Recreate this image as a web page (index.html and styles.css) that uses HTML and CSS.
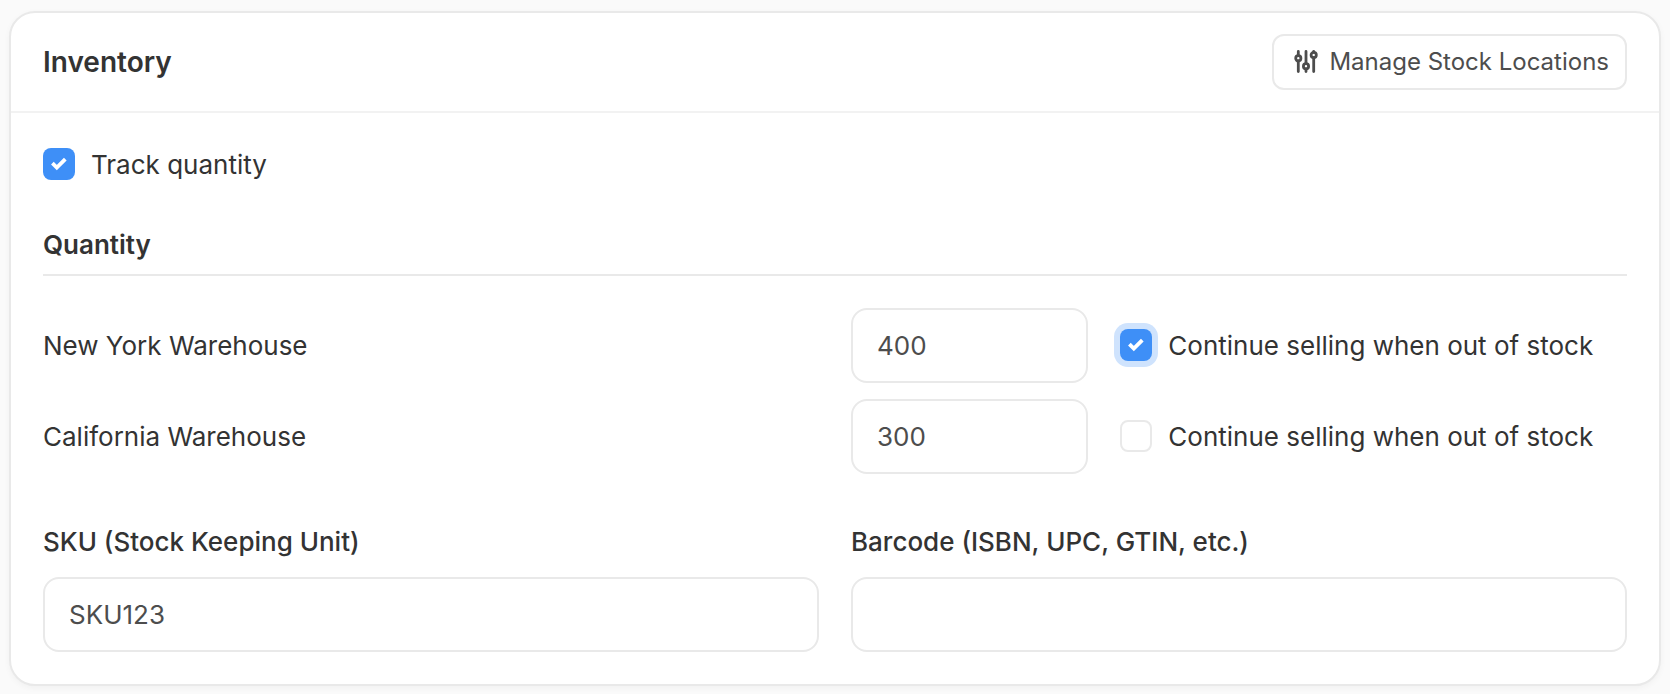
FILE: index.html
```html
<!DOCTYPE html>
<html lang="en">
<head>
<meta charset="utf-8">
<meta name="viewport" content="width=device-width, initial-scale=1">
<title>Inventory</title>
<link rel="stylesheet" href="styles.css">
</head>
<body>
<main class="card">
  <header class="card-header">
    <h1 class="card-title">Inventory</h1>
    <button class="button" type="button">
      <svg class="button-icon" viewBox="0 0 24 24" aria-hidden="true">
        <path d="M4.3 1.5V5.7M4.3 10.9V21.5M12 1.5V13.7M12 18.9V21.5M19.7 7.6V21.5M19.7 1.5V2.4"/>
        <circle cx="4.3" cy="8.3" r="2.6"/>
        <circle cx="12" cy="16.3" r="2.6"/>
        <circle cx="19.7" cy="5" r="2.6"/>
      </svg>
      Manage Stock Locations
    </button>
  </header>
  <div class="card-body">
    <label class="check"><input class="check-box" type="checkbox" checked><span>Track quantity</span></label>

    <section class="quantity">
      <h2 class="section-title">Quantity</h2>
      <div class="stock-row">
        <label class="stock-name" for="qty-ny">New York Warehouse</label>
        <input class="input" id="qty-ny" type="text" inputmode="numeric" value="400">
        <label class="check stock-check"><input class="check-box check-box-active" type="checkbox" checked><span>Continue selling when out of stock</span></label>
      </div>
      <div class="stock-row">
        <label class="stock-name" for="qty-ca">California Warehouse</label>
        <input class="input" id="qty-ca" type="text" inputmode="numeric" value="300">
        <label class="check stock-check"><input class="check-box" type="checkbox"><span>Continue selling when out of stock</span></label>
      </div>
    </section>

    <div class="fields">
      <div class="field">
        <label class="field-label" for="sku">SKU (Stock Keeping Unit)</label>
        <input class="input" id="sku" type="text" value="SKU123">
      </div>
      <div class="field">
        <label class="field-label" for="barcode">Barcode (ISBN, UPC, GTIN, etc.)</label>
        <input class="input" id="barcode" type="text">
      </div>
    </div>
  </div>
</main>
</body>
</html>
```
FILE: styles.css
```css
* {
  box-sizing: border-box;
}

body {
  margin: 0;
  padding: 11px 9px 8px;
  background: #fafafa;
  color: #333;
  font-family: Inter, "Liberation Sans", sans-serif;
  font-size: 26px;
  line-height: 40px;
}

.card {
  background: #fff;
  border: 2px solid #e9e9e9;
  border-radius: 26px;
  box-shadow: 0 2px 6px rgba(0, 0, 0, 0.04);
}

.card-header {
  display: flex;
  align-items: center;
  justify-content: space-between;
  padding: 21px 32px;
  border-bottom: 2px solid #f2f2f2;
}

.card-title {
  margin: 0;
  font-size: 28px;
  font-weight: 600;
}

.button {
  display: flex;
  align-items: center;
  gap: 11px;
  height: 56px;
  padding: 0 16px 0 20px;
  border: 2px solid #e9e9e9;
  border-radius: 12px;
  background: #fff;
  color: #4d4d4d;
  font: inherit;
  font-size: 24px;
}

.button-icon {
  width: 24px;
  height: 24px;
  fill: none;
  stroke: currentColor;
  stroke-width: 2.8;
  stroke-linecap: round;
}

.card-body {
  padding: 32px;
}

.check {
  display: flex;
  align-items: center;
  gap: 16px;
}

.check-box {
  appearance: none;
  flex: none;
  width: 32px;
  height: 32px;
  margin: 0 0 2px;
  border: 2px solid #e9e9e9;
  border-radius: 8px;
  background: #fff;
}

.check-box:checked {
  border: 0;
  background: #3e8ff7 url("data:image/svg+xml,%3Csvg xmlns='http://www.w3.org/2000/svg' viewBox='0 0 32 32'%3E%3Cpath d='M9.4 15.2L13.8 19.6L22.3 11.1' fill='none' stroke='white' stroke-width='3.8'/%3E%3C/svg%3E") center / 32px 32px no-repeat;
}

.check-box-active {
  box-shadow: 0 0 0 6px #cfe3fd;
}

.quantity {
  display: grid;
  gap: 16px;
  margin-top: 40px;
}

.section-title {
  margin: 0 0 16px;
  padding-bottom: 9px;
  border-bottom: 2px solid #e9e9e9;
  font-size: 26px;
  font-weight: 600;
}

.stock-row {
  display: grid;
  grid-template-columns: repeat(6, minmax(0, 1fr));
  gap: 32px;
  align-items: center;
}

.stock-name {
  grid-column: span 3;
}

.stock-check {
  grid-column: span 2;
  white-space: nowrap;
}

.input {
  width: 100%;
  height: 75px;
  padding: 0 24px;
  border: 2px solid #e9e9e9;
  border-radius: 16px;
  background: #fff;
  color: #4d4d4d;
  font: inherit;
}

.fields {
  display: grid;
  grid-template-columns: repeat(2, minmax(0, 1fr));
  gap: 32px;
  margin-top: 48px;
}

.field {
  display: grid;
  gap: 15px;
}

.field-label {
  font-weight: 500;
}
```
